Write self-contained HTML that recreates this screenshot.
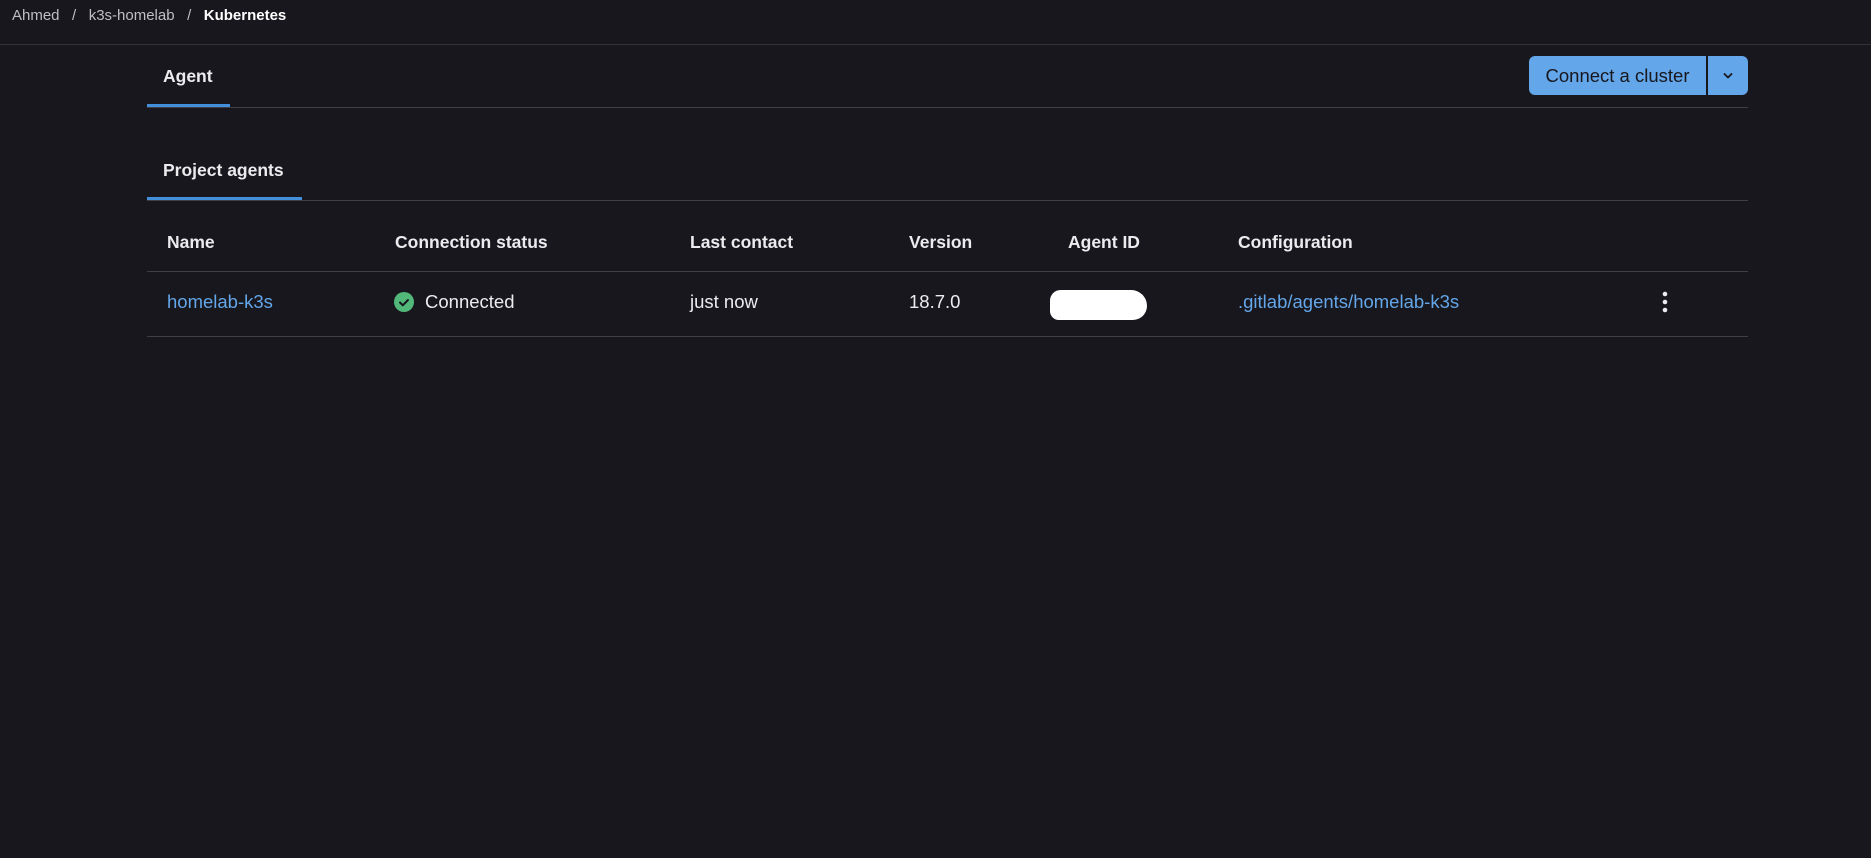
<!DOCTYPE html>
<html><head><meta charset="utf-8"><style>
body{margin:0;width:1871px;height:858px;background:#18171d;font-family:"Liberation Sans",sans-serif;color:#ececef;position:relative;overflow:hidden}
.a{position:absolute;white-space:nowrap}
.line{position:absolute;height:1px;background:#3f3e45}
.bc{font-size:15px;top:7px;color:#bfbfc3}
.b{font-weight:bold;font-size:17.5px!important}
.t{font-size:18.5px}
.link{color:#63a6e9}
</style></head><body>
<div class="a bc" style="left:12px">Ahmed&nbsp;&nbsp;&nbsp;/&nbsp;&nbsp;&nbsp;k3s-homelab&nbsp;&nbsp;&nbsp;/&nbsp;&nbsp;&nbsp;<span style="color:#fff;font-weight:bold">Kubernetes</span></div>
<div class="line" style="left:0;right:0;top:44px;background:#333238"></div>

<div class="a t b" style="left:163px;top:66px">Agent</div>
<div class="line" style="left:147px;width:1601px;top:107px"></div>
<div class="a" style="left:147px;width:83px;top:104px;height:3px;background:#428fdc"></div>

<div class="a" style="left:1529px;top:56px;width:177px;height:39px;background:#63a6e9;border-radius:6px 0 0 6px;color:#18171d;font-size:18.5px;line-height:40px;text-align:center">Connect a cluster</div>
<div class="a" style="left:1708px;top:56px;width:40px;height:39px;background:#63a6e9;border-radius:0 6px 6px 0"><svg width="40" height="39"><path d="M16.5 18l3.5 3.5 3.5-3.5" stroke="#18171d" stroke-width="1.8" fill="none" stroke-linecap="round" stroke-linejoin="round"/></svg></div>

<div class="a t b" style="left:163px;top:160px">Project agents</div>
<div class="line" style="left:147px;width:1601px;top:200px"></div>
<div class="a" style="left:147px;width:155px;top:197px;height:3px;background:#428fdc"></div>

<div class="a t b" style="left:167px;top:232px">Name</div>
<div class="a t b" style="left:395px;top:232px">Connection status</div>
<div class="a t b" style="left:690px;top:232px">Last contact</div>
<div class="a t b" style="left:909px;top:232px">Version</div>
<div class="a t b" style="left:1068px;top:232px">Agent ID</div>
<div class="a t b" style="left:1238px;top:232px">Configuration</div>
<div class="line" style="left:147px;width:1601px;top:271px"></div>

<div class="a t link" style="left:167px;top:291px">homelab-k3s</div>
<svg class="a" style="left:394px;top:292px" width="20" height="20"><circle cx="10" cy="10" r="10" fill="#52b87a"/><path d="M6 10.5l2.8 2.8L14 8" stroke="#18171d" stroke-width="2" fill="none" stroke-linecap="round" stroke-linejoin="round"/></svg>
<div class="a t" style="left:425px;top:291px">Connected</div>
<div class="a t" style="left:690px;top:291px">just now</div>
<div class="a t" style="left:909px;top:291px">18.7.0</div>
<div class="a" style="left:1050px;top:290px;width:97px;height:30px;background:#fff;border-radius:12px 18px 16px 10px"></div>
<div class="a t link" style="left:1238px;top:291px">.gitlab/agents/homelab-k3s</div>
<svg class="a" style="left:1660px;top:290px" width="10" height="24"><circle cx="5" cy="4" r="2.3" fill="#ececef"/><circle cx="5" cy="12" r="2.3" fill="#ececef"/><circle cx="5" cy="20" r="2.3" fill="#ececef"/></svg>
<div class="line" style="left:147px;width:1601px;top:336px"></div>
</body></html>
